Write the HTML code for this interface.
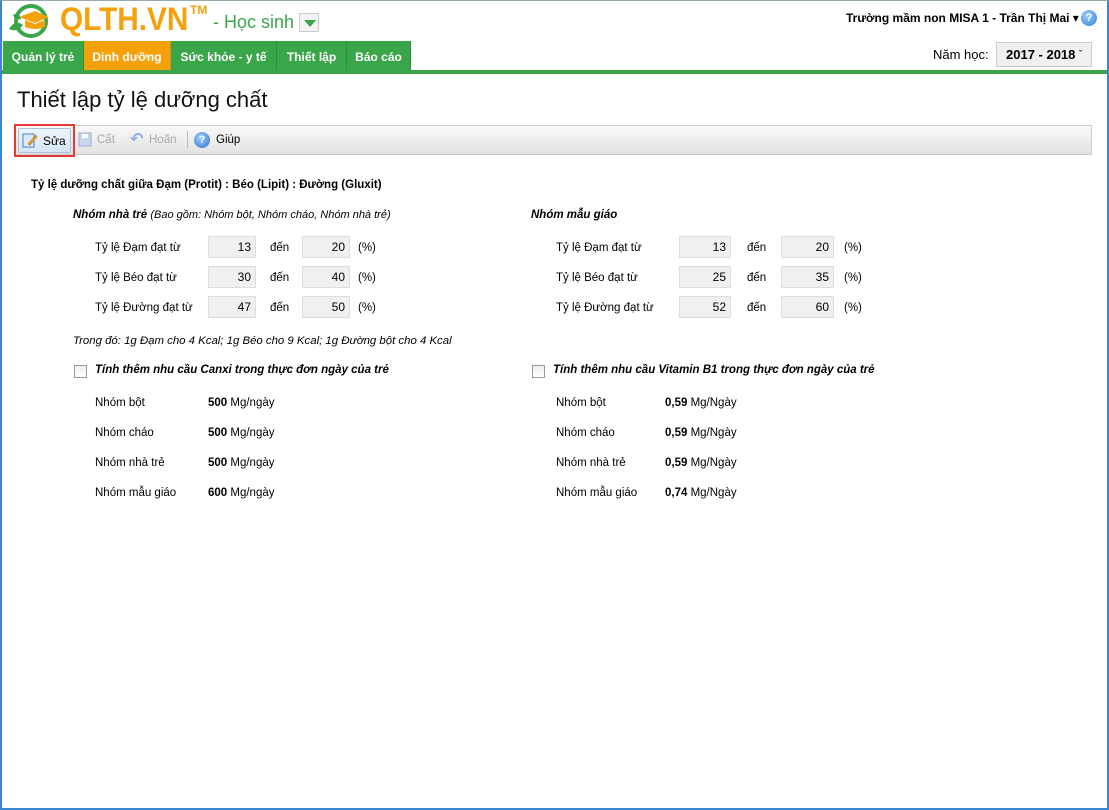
<!DOCTYPE html>
<html><head><meta charset="utf-8"><style>
*{box-sizing:border-box;margin:0;padding:0}
body{width:1109px;height:810px;background:#fff;font-family:"Liberation Sans","DejaVu Sans",sans-serif;font-size:11.5px;color:#000;position:relative;overflow:hidden}
.abs{position:absolute}
.frame{position:absolute;left:0;top:0;width:1109px;height:810px;border-left:2px solid #3b86d0;border-right:2px solid #3b86d0;border-bottom:2px solid #3b86d0;border-top:1px solid #9aa}
.tab{position:absolute;top:41px;height:33px;line-height:33px;color:#fff;font-weight:bold;font-size:12px;text-align:center;background:#3aa64a;border-right:1px solid #2e8c3c}
.inp{position:absolute;width:48px;height:22px;background:#f0f0f0;border:1px solid #ddd;text-align:right;padding-right:4px;line-height:20px;font-size:12px}
.lbl{position:absolute}
.b{font-weight:bold}
.it{font-style:italic}
.cb{position:absolute;width:13px;height:13px;border:1px solid #999;background:linear-gradient(#eee,#fff)}
</style></head><body>
<div class="frame"></div>
<svg class="abs" style="left:5px;top:3px" width="52" height="36" viewBox="0 0 52 36">
<circle cx="26" cy="18" r="15" fill="none" stroke="#3aa64a" stroke-width="4"/>
<path d="M14 14 L30 8 L44 14 L30 20 Z" fill="#f5a10c"/>
<path d="M20 17 L20 24 Q30 28 40 24 L40 17 L30 21 Z" fill="#f5a10c"/>
<path d="M4 26 Q10 16 18 22 Q12 30 4 26Z" fill="#3aa64a"/>
<path d="M8 12 Q14 8 16 16 Q10 18 8 12Z" fill="#3aa64a"/>
</svg>
<div class="abs b" style="left:60px;top:1px;font-size:32px;color:#f5a10c;transform:scaleX(0.93);transform-origin:left">QLTH.VN</div>
<div class="abs b" style="left:190px;top:3px;font-size:12px;color:#f5a10c">TM</div>
<div class="abs" style="left:213px;top:12px;font-size:18px;color:#3aa64a">- Học sinh</div>
<div class="abs" style="left:299px;top:13px;width:20px;height:19px;border:1px solid #ccc;background:#f3f3f3"><div style="margin:6px 0 0 4px;width:0;height:0;border-left:6px solid transparent;border-right:6px solid transparent;border-top:7px solid #3aa64a"></div></div>
<div class="abs b" style="left:846px;top:11px;font-size:12px">Trường mầm non MISA 1 - Trần Thị Mai ▾</div>
<div class="abs" style="left:1081px;top:10px;width:16px;height:16px;border-radius:50%;background:radial-gradient(circle at 40% 35%,#9cd0ff,#2f7fd6);color:#fff;font-size:11px;font-weight:bold;text-align:center;line-height:16px">?</div>
<div class="tab" style="left:3px;width:81px">Quản lý trẻ</div>
<div class="tab" style="left:84px;width:87px;background:#f5a10c;border-right:1px solid #d98e0a">Dinh dưỡng</div>
<div class="tab" style="left:171px;width:106px">Sức khỏe - y tế</div>
<div class="tab" style="left:277px;width:70px">Thiết lập</div>
<div class="tab" style="left:347px;width:64px">Báo cáo</div>
<div class="abs" style="left:2px;top:70px;width:1105px;height:4px;background:#3aa64a"></div>
<div class="abs" style="left:933px;top:47px;font-size:13px">Năm học:</div>
<div class="abs b" style="left:996px;top:42px;width:96px;height:25px;border:1px solid #ccc;background:#f0f0f0;font-size:13px;line-height:23px;padding-left:9px">2017 - 2018 <span style="font-size:9px;vertical-align:top">ˇ</span></div>
<div class="abs" style="left:17px;top:87px;font-size:22px;color:#111">Thiết lập tỷ lệ dưỡng chất</div>
<div class="abs" style="left:14px;top:125px;width:1078px;height:30px;border:1px solid #ccc;background:linear-gradient(#f9f9f9,#e2e2e2)"></div>
<div class="abs" style="left:14px;top:124px;width:61px;height:33px;border:2px solid #e53935"></div>
<div class="abs" style="left:18px;top:128px;width:53px;height:25px;border:1px solid #aac4e0;background:linear-gradient(#eef5fc,#d6e6f5);border-radius:2px"></div>
<svg class="abs" style="left:22px;top:132px" width="16" height="16"><rect x="1" y="2" width="11" height="13" fill="#dceafa" stroke="#4a82c0"/><path d="M6 12 L14 3 L15 5 L8 13 Z" fill="#f0b030" stroke="#a07010" stroke-width=".6"/></svg>
<div class="abs" style="left:43px;top:134px;font-size:12px">Sửa</div>
<svg class="abs" style="left:78px;top:132px" width="14" height="15"><rect x="1" y="1" width="12" height="13" fill="#c9d7ee" stroke="#9ab0d8"/><rect x="4" y="2" width="6" height="4" fill="#fff"/></svg>
<div class="abs" style="left:97px;top:134px;color:#aaa">Cất</div>
<div class="abs" style="left:130px;top:129px;color:#8fb1dd;font-size:16px;font-weight:bold">↶</div>
<div class="abs" style="left:149px;top:134px;color:#aaa">Hoãn</div>
<div class="abs" style="left:187px;top:131px;width:1px;height:17px;background:#bbb"></div>
<div class="abs" style="left:194px;top:132px;width:16px;height:16px;border-radius:50%;background:radial-gradient(circle at 40% 35%,#9cd0ff,#2f6fc6);color:#fff;font-size:11px;font-weight:bold;text-align:center;line-height:16px">?</div>
<div class="abs" style="left:216px;top:134px">Giúp</div>

<div class="abs b" style="left:31px;top:179px;font-size:11.5px">Tỷ lệ dưỡng chất giữa Đạm (Protit) : Béo (Lipit) : Đường (Gluxit)</div>
<div class="abs it" style="left:73px;top:209px"><b>Nhóm nhà trẻ</b> <span style="font-size:11px">(Bao gồm: Nhóm bột, Nhóm cháo, Nhóm nhà trẻ)</span></div>
<div class="lbl" style="left:95px;top:242px">Tỷ lệ Đạm đạt từ</div><div class="inp" style="left:208px;top:236px">13</div><div class="lbl" style="left:270px;top:242px">đến</div><div class="inp" style="left:302px;top:236px">20</div><div class="lbl" style="left:358px;top:242px">(%)</div>
<div class="lbl" style="left:95px;top:272px">Tỷ lệ Béo đạt từ</div><div class="inp" style="left:208px;top:266px">30</div><div class="lbl" style="left:270px;top:272px">đến</div><div class="inp" style="left:302px;top:266px">40</div><div class="lbl" style="left:358px;top:272px">(%)</div>
<div class="lbl" style="left:95px;top:302px">Tỷ lệ Đường đạt từ</div><div class="inp" style="left:208px;top:296px">47</div><div class="lbl" style="left:270px;top:302px">đến</div><div class="inp" style="left:302px;top:296px">50</div><div class="lbl" style="left:358px;top:302px">(%)</div>

<div class="abs it b" style="left:531px;top:209px">Nhóm mẫu giáo</div>
<div class="lbl" style="left:556px;top:242px">Tỷ lệ Đạm đạt từ</div><div class="inp" style="left:679px;top:236px;width:52px">13</div><div class="lbl" style="left:747px;top:242px">đến</div><div class="inp" style="left:781px;top:236px;width:53px">20</div><div class="lbl" style="left:844px;top:242px">(%)</div>
<div class="lbl" style="left:556px;top:272px">Tỷ lệ Béo đạt từ</div><div class="inp" style="left:679px;top:266px;width:52px">25</div><div class="lbl" style="left:747px;top:272px">đến</div><div class="inp" style="left:781px;top:266px;width:53px">35</div><div class="lbl" style="left:844px;top:272px">(%)</div>
<div class="lbl" style="left:556px;top:302px">Tỷ lệ Đường đạt từ</div><div class="inp" style="left:679px;top:296px;width:52px">52</div><div class="lbl" style="left:747px;top:302px">đến</div><div class="inp" style="left:781px;top:296px;width:53px">60</div><div class="lbl" style="left:844px;top:302px">(%)</div>

<div class="abs it" style="left:73px;top:335px;font-size:11.4px">Trong đó: 1g Đạm cho 4 Kcal; 1g Béo cho 9 Kcal; 1g Đường bột cho 4 Kcal</div>
<div class="cb" style="left:74px;top:365px"></div>
<div class="abs it b" style="left:95px;top:364px">Tính thêm nhu cầu Canxi trong thực đơn ngày của trẻ</div>
<div class="cb" style="left:532px;top:365px"></div>
<div class="abs it b" style="left:553px;top:364px">Tính thêm nhu cầu Vitamin B1 trong thực đơn ngày của trẻ</div>

<div class="lbl" style="left:95px;top:397px">Nhóm bột</div><div class="lbl" style="left:208px;top:397px"><b>500</b> Mg/ngày</div>
<div class="lbl" style="left:95px;top:427px">Nhóm cháo</div><div class="lbl" style="left:208px;top:427px"><b>500</b> Mg/ngày</div>
<div class="lbl" style="left:95px;top:457px">Nhóm nhà trẻ</div><div class="lbl" style="left:208px;top:457px"><b>500</b> Mg/ngày</div>
<div class="lbl" style="left:95px;top:487px">Nhóm mẫu giáo</div><div class="lbl" style="left:208px;top:487px"><b>600</b> Mg/ngày</div>

<div class="lbl" style="left:556px;top:397px">Nhóm bột</div><div class="lbl" style="left:665px;top:397px"><b>0,59</b> Mg/Ngày</div>
<div class="lbl" style="left:556px;top:427px">Nhóm cháo</div><div class="lbl" style="left:665px;top:427px"><b>0,59</b> Mg/Ngày</div>
<div class="lbl" style="left:556px;top:457px">Nhóm nhà trẻ</div><div class="lbl" style="left:665px;top:457px"><b>0,59</b> Mg/Ngày</div>
<div class="lbl" style="left:556px;top:487px">Nhóm mẫu giáo</div><div class="lbl" style="left:665px;top:487px"><b>0,74</b> Mg/Ngày</div>
</body></html>
